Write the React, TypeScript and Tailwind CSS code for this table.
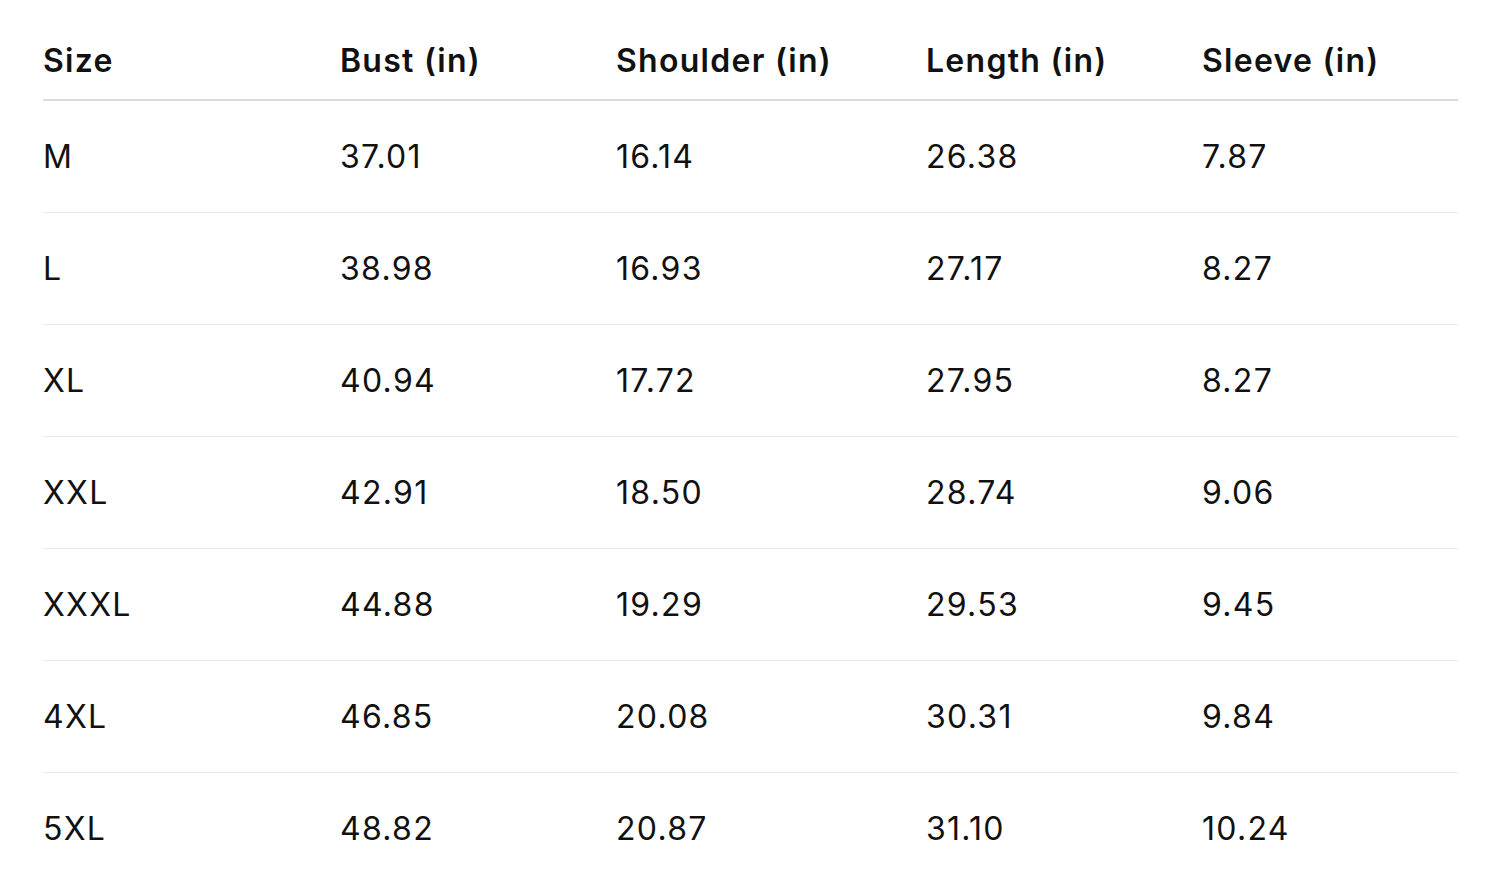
import React from "react";

const headers = ["Size", "Bust (in)", "Shoulder (in)", "Length (in)", "Sleeve (in)"];
const rows = [
  ["M", "37.01", "16.14", "26.38", "7.87"],
  ["L", "38.98", "16.93", "27.17", "8.27"],
  ["XL", "40.94", "17.72", "27.95", "8.27"],
  ["XXL", "42.91", "18.50", "28.74", "9.06"],
  ["XXXL", "44.88", "19.29", "29.53", "9.45"],
  ["4XL", "46.85", "20.08", "30.31", "9.84"],
  ["5XL", "48.82", "20.87", "31.10", "10.24"],
];

export default function App() {
  return (
    <div
      className="w-[1501px] h-[885px] bg-white overflow-hidden px-[43px] text-[#111111]"
      style={{ fontFamily: "Inter, 'Noto Sans', sans-serif" }}
    >
      <div className="grid grid-cols-[297px_276px_310px_276px_1fr] h-[101px] pt-[23px] border-b-2 border-[#dcdcdc] items-center text-[32px] font-semibold tracking-[0.04em]">
        {headers.map((h) => (
          <div key={h}>{h}</div>
        ))}
      </div>
      {rows.map((r, i) => (
        <div
          key={r[0]}
          className={`grid grid-cols-[297px_276px_310px_276px_1fr] items-center text-[32px] tracking-[0.04em] ${
            i < rows.length - 1 ? "h-[112px] border-b border-[#e8e8e8]" : "h-[112px]"
          }`}
        >
          {r.map((c, j) => (
            <div key={j}>{c}</div>
          ))}
        </div>
      ))}
    </div>
  );
}
